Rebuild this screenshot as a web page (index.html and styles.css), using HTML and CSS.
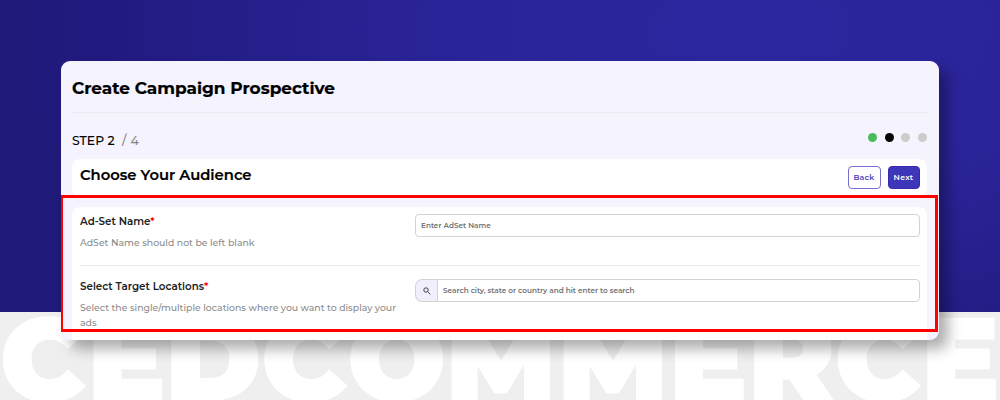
FILE: index.html
```
<!DOCTYPE html>
<html lang="en">
<head>
  <meta charset="UTF-8" />
  <meta name="viewport" content="width=device-width, initial-scale=1.0"/>
  <title>Create Campaign Prospective</title>
  <link rel="stylesheet" href="styles.css">
</head>
<body>
  <svg class="watermark" width="1000" height="88" viewBox="0 0 1000 88">
    <text y="87.5" x="0 87.5 165.3 261.5 347.5 445.5 557.5 669 748.3 835 921.3">CEDCOMMERCE</text>
  </svg>

  <div class="card">
    <h1>Create Campaign Prospective</h1>

    <div class="steps">
      <div class="step-label">STEP 2 <span>/ 4</span></div>
      <div class="dots">
        <i class="dot done"></i>
        <i class="dot active"></i>
        <i class="dot"></i>
        <i class="dot"></i>
      </div>
    </div>

    <div class="panel heading">
      <h2>Choose Your Audience</h2>
      <div class="buttons">
        <button class="btn">Back</button>
        <button class="btn primary">Next</button>
      </div>
    </div>

    <div class="panel form">
      <div class="row">
        <div class="info">
          <h3>Ad-Set Name<b>*</b></h3>
          <p>AdSet Name should not be left blank</p>
        </div>
        <div class="field">
          <input type="text" placeholder="Enter AdSet Name">
        </div>
      </div>
      <div class="row">
        <div class="info">
          <h3>Select Target Locations<b>*</b></h3>
          <p>Select the single/multiple locations where you want to display your ads</p>
        </div>
        <div class="field search">
          <span class="search-icon">
            <svg width="8" height="8" viewBox="0 0 8 8">
              <circle cx="3" cy="3" r="2.2"/>
              <path d="M4.7 4.7L7.4 7.4"/>
            </svg>
          </span>
          <input type="text" placeholder="Search city, state or country and hit enter to search">
        </div>
      </div>
    </div>
    <div class="highlight"></div>
  </div>
</body>
</html>
```

FILE: styles.css
```
* {
  box-sizing: border-box;
}
body {
  font-family: Montserrat, Inter, sans-serif;
  margin: 0;
  height: 400px;
  padding: 61px 61px 0;
  overflow: hidden;
  position: relative;
  background: linear-gradient(#efefef, #efefef) 0 312px no-repeat,
    radial-gradient(ellipse 760px 420px at 750px 30px, #2d279f 0%, #2a249a 40%, #211b80 85%, #1f1979 100%);
}
h1, h2, h3, p {
  margin: 0;
}
.watermark {
  position: absolute;
  left: 0;
  top: 312px;
}
.watermark text {
  font-size: 116px;
  font-weight: 900;
  fill: #fff;
  stroke: #fff;
  stroke-width: 1px;
}
.card {
  position: relative;
  height: 279px;
  padding: 0 12px 0 11px;
  border-radius: 9px;
  background: #f4f3fe;
  box-shadow: 9px 9px 14px rgba(0,0,0,0.32);
}
h1 {
  height: 52px;
  padding-top: 16px;
  font-size: 16.9px;
  line-height: 22px;
  font-weight: 700;
  -webkit-text-stroke: 0.2px #000;
  border-bottom: 1px solid #ebeaf0;
}
.steps {
  display: flex;
  justify-content: space-between;
  height: 46px;
  padding-top: 20px;
}
.step-label {
  font-size: 12.4px;
  line-height: 16px;
  font-weight: 500;
}
.step-label span {
  margin-left: 4px;
  color: #888;
  letter-spacing: 0.5px;
}
.dots {
  display: flex;
  gap: 7.6px;
}
.dot {
  width: 9px;
  height: 9px;
  border-radius: 50%;
  background: #ccc;
}
.dot.done {
  background: #4cbb5c;
}
.dot.active {
  background: #060606;
}
.panel {
  padding: 0 8px;
  border-radius: 8px;
  background: #fff;
}
.heading {
  display: flex;
  justify-content: space-between;
  height: 37px;
  padding-right: 7.5px;
}
h2 {
  padding-top: 7px;
  font-size: 14.75px;
  line-height: 18px;
  font-weight: 600;
  -webkit-text-stroke: 0.2px #000;
}
.buttons {
  display: flex;
  gap: 7px;
  padding-top: 7px;
}
.btn {
  width: 33px;
  height: 23px;
  padding: 0 0 1px;
  border: 1px solid #766fce;
  border-radius: 4px;
  background: #fff;
  color: #4a40bd;
  font-family: inherit;
  font-size: 7.8px;
  font-weight: 600;
  letter-spacing: 0.25px;
}
.btn.primary {
  width: 32px;
  border-color: #342cad;
  background: #3e35b8;
  color: #fff;
}
.form {
  height: 133px;
  margin-top: 11px;
  padding-right: 7.5px;
  border-radius: 8px 8px 0 0;
}
.row {
  display: flex;
  height: 58px;
  padding-top: 7px;
}
.row + .row {
  height: 75px;
  padding-top: 13px;
  border-top: 1px solid #ebebeb;
}
.info {
  width: 335px;
}
h3 {
  font-size: 10.3px;
  line-height: 16px;
  font-weight: 600;
  color: #222;
}
h3 b {
  color: #f00;
  font-weight: 600;
}
.info p {
  width: 325px;
  margin-top: 6px;
  font-size: 9.32px;
  line-height: 14.5px;
  font-weight: 500;
  color: #8c8c8c;
}
.field {
  flex: 1;
  display: flex;
  height: 23px;
}
.field input {
  flex: 1;
  height: 23px;
  padding: 0 5px;
  border: 1px solid #d3d3d3;
  border-radius: 4px;
  outline: none;
  font-family: inherit;
  font-size: 7.3px;
  font-weight: 600;
}
.field input::placeholder {
  color: #707070;
}
.search-icon {
  display: flex;
  align-items: center;
  justify-content: center;
  width: 22px;
  border: 1px solid #d3d3d3;
  border-right: none;
  border-radius: 7px 0 0 7px;
  background: #f1effc;
}
.search-icon svg {
  fill: none;
  stroke: #444;
  stroke-width: 1;
}
.search input {
  border-radius: 0 4px 4px 0;
}
.highlight {
  position: absolute;
  left: 0;
  top: 134px;
  width: 877px;
  height: 137px;
  border: 3px solid #ff0000;
  border-left-width: 2px;
}
```
